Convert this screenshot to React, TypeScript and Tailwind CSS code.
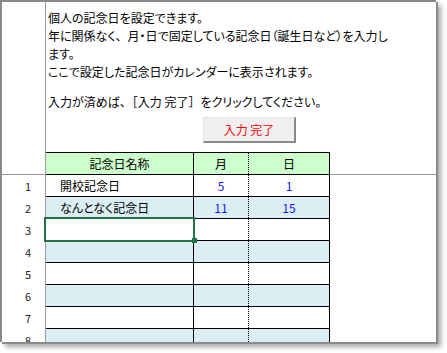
import React from 'react';

type Row = { n: number; name: string; m: string; d: string };

const rows: Row[] = [
  { n: 1, name: '開校記念日', m: '5', d: '1' },
  { n: 2, name: 'なんとなく記念日', m: '11', d: '15' },
  { n: 3, name: '', m: '', d: '' },
  { n: 4, name: '', m: '', d: '' },
  { n: 5, name: '', m: '', d: '' },
  { n: 6, name: '', m: '', d: '' },
  { n: 7, name: '', m: '', d: '' },
  { n: 8, name: '', m: '', d: '' },
];

const App: React.FC = () => {
  return (
    <div className="w-[447px] h-[353px] bg-white text-[12px] text-black font-['Noto_Sans_CJK_JP',sans-serif] [font-feature-settings:'palt']">
      <div className="w-[436px] h-[342px] border-t-2 border-l-2 border-[#8a8a8a] shadow-[2px_2px_0_#8a8a8a,5px_5px_5px_rgba(0,0,0,0.35)] overflow-hidden flex flex-col">
        {/* Description + button */}
        <div className="flex h-[150px] shrink-0">
          <div className="w-[44px] shrink-0 border-r border-[#9b9b9b]" />
          <div className="flex-1 pl-[2px] pt-[7px] leading-[18px]">
            <div>個人の記念日を設定できます。</div>
            <div>
              年に関係なく
              <span className="[font-feature-settings:normal]">、</span>
              月・日で固定している記念日（誕生日など）を入力し
            </div>
            <div>ます。</div>
            <div>ここで設定した記念日がカレンダーに表示されます。</div>
            <div className="mt-[12px]">
              入力が済めば
              <span className="[font-feature-settings:normal]">、［</span>
              入力 完了
              <span className="[font-feature-settings:normal]">］</span>
              をクリックしてください。
            </div>
            <button
              type="button"
              className="mt-[6px] ml-[155px] w-[93px] h-[26px] bg-[#f0f0f0] border border-[#e3e3e3] border-r-2 border-b-2 border-r-[#8a8a8a] border-b-[#8a8a8a] text-[#ff0000] text-[12px] leading-none flex items-center justify-center"
            >
              入力 完了
            </button>
          </div>
        </div>

        {/* Header row */}
        <div className="flex h-[23px] shrink-0">
          <div className="w-[44px] shrink-0 border-r border-b border-[#9b9b9b]" />
          <div className="w-[284px] shrink-0 flex border-t border-b border-black bg-[#ccffcc]">
            <div className="w-[148px] border-r border-black flex items-center justify-center">記念日名称</div>
            <div className="w-[55px] border-r border-dotted border-black flex items-center justify-center">月</div>
            <div className="w-[81px] border-r border-black flex items-center justify-center">日</div>
          </div>
          <div className="flex-1 border-b border-[#9b9b9b]" />
        </div>

        {/* Data rows */}
        {rows.map((r) => (
          <div key={r.n} className="flex h-[22px] shrink-0">
            <div className="w-[44px] shrink-0 border-r border-[#9b9b9b] pl-[9px] flex items-center justify-center text-[11px] text-[#222]">
              {r.n}
            </div>
            <div
              className={`w-[284px] shrink-0 flex border-b border-black ${
                r.n % 2 === 0 ? 'bg-[#daeef3]' : 'bg-white'
              }`}
            >
              <div className="relative w-[148px] border-r border-black pl-[14px] flex items-center">
                {r.name}
                {r.n === 3 && (
                  <div className="absolute z-10 top-[-2px] left-[-2px] right-[-2px] bottom-[-2px] border-2 border-[#217346]">
                    <div className="absolute right-[-4px] bottom-[-3px] w-[5px] h-[5px] bg-[#217346]" />
                  </div>
                )}
              </div>
              <div className="w-[55px] border-r border-dotted border-black flex items-center justify-center text-[#1515ff]">
                {r.m}
              </div>
              <div className="w-[81px] border-r border-black flex items-center justify-center text-[#1515ff]">
                {r.d}
              </div>
            </div>
            <div className="flex-1" />
          </div>
        ))}
      </div>
    </div>
  );
};

export default App;
